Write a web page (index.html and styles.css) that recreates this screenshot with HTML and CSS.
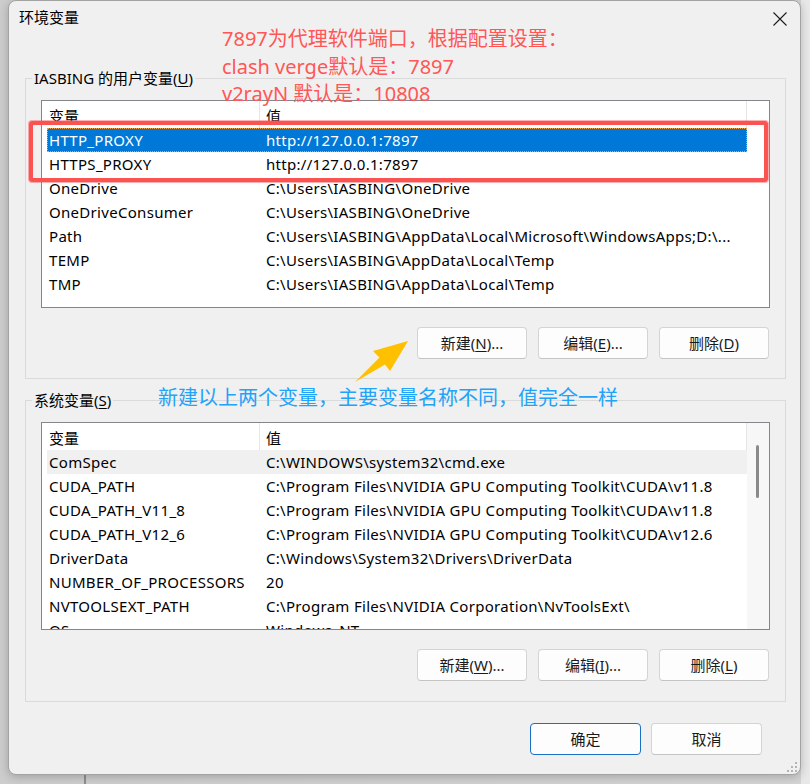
FILE: index.html
```html
<!DOCTYPE html>
<html lang="zh-CN">
<head>
<meta charset="utf-8">
<title>环境变量</title>
<link rel="stylesheet" href="styles.css">
</head>
<body>
<div class="dialog">
  <div class="titlebar">
    <span class="title">环境变量</span>
    <svg class="close" width="14" height="14" viewBox="0 0 14 14" aria-label="关闭"><path d="M0.5 0.5 L13.5 13.5 M13.5 0.5 L0.5 13.5" stroke="#1b1b1b" stroke-width="1.1" fill="none"/></svg>
  </div>

  <section class="group group-user">
    <div class="group-title">IASBING 的用户变量(<u>U</u>)</div>
    <div class="list">
      <div class="list-head"><div class="cell c1">变量</div><div class="cell c2">值</div></div>
      <div class="rows">
        <div class="row selected"><div class="cell c1">HTTP_PROXY</div><div class="cell c2">http://127.0.0.1:7897</div></div>
        <div class="row"><div class="cell c1">HTTPS_PROXY</div><div class="cell c2">http://127.0.0.1:7897</div></div>
        <div class="row"><div class="cell c1">OneDrive</div><div class="cell c2">C:\Users\IASBING\OneDrive</div></div>
        <div class="row"><div class="cell c1">OneDriveConsumer</div><div class="cell c2">C:\Users\IASBING\OneDrive</div></div>
        <div class="row"><div class="cell c1">Path</div><div class="cell c2">C:\Users\IASBING\AppData\Local\Microsoft\WindowsApps;D:\...</div></div>
        <div class="row"><div class="cell c1">TEMP</div><div class="cell c2">C:\Users\IASBING\AppData\Local\Temp</div></div>
        <div class="row"><div class="cell c1">TMP</div><div class="cell c2">C:\Users\IASBING\AppData\Local\Temp</div></div>
      </div>
    </div>
    <div class="btns">
      <button class="btn">新建(<u>N</u>)...</button>
      <button class="btn">编辑(<u>E</u>)...</button>
      <button class="btn">删除(<u>D</u>)</button>
    </div>
  </section>

  <section class="group group-sys">
    <div class="group-title">系统变量(<u>S</u>)</div>
    <div class="list list-scroll">
      <div class="list-main">
        <div class="list-head"><div class="cell c1">变量</div><div class="cell c2">值</div></div>
        <div class="rows">
          <div class="row hover"><div class="cell c1">ComSpec</div><div class="cell c2">C:\WINDOWS\system32\cmd.exe</div></div>
          <div class="row"><div class="cell c1">CUDA_PATH</div><div class="cell c2">C:\Program Files\NVIDIA GPU Computing Toolkit\CUDA\v11.8</div></div>
          <div class="row"><div class="cell c1">CUDA_PATH_V11_8</div><div class="cell c2">C:\Program Files\NVIDIA GPU Computing Toolkit\CUDA\v11.8</div></div>
          <div class="row"><div class="cell c1">CUDA_PATH_V12_6</div><div class="cell c2">C:\Program Files\NVIDIA GPU Computing Toolkit\CUDA\v12.6</div></div>
          <div class="row"><div class="cell c1">DriverData</div><div class="cell c2">C:\Windows\System32\Drivers\DriverData</div></div>
          <div class="row"><div class="cell c1">NUMBER_OF_PROCESSORS</div><div class="cell c2">20</div></div>
          <div class="row"><div class="cell c1">NVTOOLSEXT_PATH</div><div class="cell c2">C:\Program Files\NVIDIA Corporation\NvToolsExt\</div></div>
          <div class="row"><div class="cell c1">OS</div><div class="cell c2">Windows_NT</div></div>
        </div>
      </div>
      <div class="scrollbar"><div class="thumb"></div></div>
    </div>
    <div class="btns">
      <button class="btn">新建(<u>W</u>)...</button>
      <button class="btn">编辑(<u>I</u>)...</button>
      <button class="btn">删除(<u>L</u>)</button>
    </div>
  </section>

  <div class="footer">
    <button class="btn btn-default">确定</button>
    <button class="btn">取消</button>
  </div>

  <div class="note note-red">7897为代理软件端口，根据配置设置：<br>clash verge默认是：7897<br>v2rayN 默认是：10808</div>
  <div class="mark-box"></div>
  <svg class="arrow" width="62" height="50" viewBox="0 0 62 50"><polygon points="58,5 23,15 29.5,21.5 5,46 35,28.5 40,35" fill="#ffc000"/></svg>
  <div class="note note-blue">新建以上两个变量，主要变量名称不同，值完全一样</div>
  <svg class="grip" width="11" height="11" viewBox="0 0 11 11"><g fill="#b4b4b4"><rect x="8" y="0" width="2" height="2"/><rect x="4" y="4" width="2" height="2"/><rect x="8" y="4" width="2" height="2"/><rect x="0" y="8" width="2" height="2"/><rect x="4" y="8" width="2" height="2"/><rect x="8" y="8" width="2" height="2"/></g></svg>
</div>
</body>
</html>
```
FILE: styles.css
```css
* { box-sizing: border-box; }

html {
  height: 100%;
  background:
    linear-gradient(to right, transparent 84px, #8f8f8f 84px, #8f8f8f 86px, transparent 86px) 0 775px / 100% 9px no-repeat,
    linear-gradient(to right, #cdcdcd 0, #d4d4d4 801px, #e8e8e8 801px);
}

body {
  margin: 0;
  height: 784px;
  overflow: hidden;
  font-family: "Noto Sans", "Noto Sans CJK SC", sans-serif;
  font-size: 15px;
  color: #000;
}

.dialog {
  position: relative;
  margin-left: 8px;
  width: 793px;
  height: 775px;
  background: #f0f0f0;
  border: 1px solid #a3a3a3;
  border-radius: 8px;
  box-shadow: 0 2px 10px rgba(0, 0, 0, 0.22);
}

.titlebar {
  height: 32px;
  display: flex;
  align-items: center;
  justify-content: space-between;
  padding: 0 13px 0 10px;
}

.title {
  font-family: "Noto Sans CJK SC", sans-serif;
  font-size: 15px;
  line-height: 32px;
}

.close { display: block; margin-top: 3px; }

.group {
  border: 1px solid #dadada;
  margin: 0 14px 0 16px;
  padding: 0 0 19px 0;
}

.group-user { margin-top: 45px; }
.group-sys { margin-top: 21px; padding-bottom: 20px; }

.group-title {
  width: fit-content;
  margin: -12px 0 0 6px;
  padding: 0 2px;
  line-height: 22px;
  background: #f0f0f0;
}

u { text-decoration-thickness: 1px; text-underline-offset: 2px; }

.list {
  margin: 11px 15px 0 15px;
  height: 208px;
  border: 1px solid #85868d;
  background: #fff;
  overflow: hidden;
}

.list-scroll { display: flex; }
.list-main { flex: 1; min-width: 0; overflow: hidden; }

.list-head {
  display: flex;
  height: 27px;
  padding-left: 5px;
}

.list-head .cell {
  line-height: 25px;
  padding-top: 2px;
  height: 27px;
  border-right: 1px solid #e5e5e5;
  font-family: "Noto Sans CJK SC", sans-serif;
}

.cell {
  white-space: nowrap;
  overflow: hidden;
}

.c1 { width: 213px; padding-left: 2px; flex: none; }
.c2 { width: 487px; padding-left: 6px; flex: none; }

.rows { padding-left: 5px; }

.row {
  display: flex;
  width: 700px;
  height: 24px;
  line-height: 24px;
  letter-spacing: 0.3px;
}

.row.selected {
  background: #0078d7;
  color: #fff;
  outline: 1px dotted #f2a24a;
  outline-offset: -1px;
}

.row.hover { background: #f0f0f0; }

.scrollbar {
  width: 22px;
  flex: none;
  background: #f7f7f7;
  padding: 22px 0 0 9px;
}

.thumb {
  width: 3px;
  height: 53px;
  border-radius: 2px;
  background: #8a8a8a;
}

.btns {
  display: flex;
  justify-content: flex-end;
  gap: 11px;
  margin: 19px 16px 0 0;
}

.btn {
  width: 110px;
  height: 32px;
  border: 1px solid #d4d4d4;
  border-bottom-color: #c4c4c4;
  border-radius: 4px;
  background: #fdfdfd;
  font-family: "Noto Sans", "Noto Sans CJK SC", sans-serif;
  font-size: 15px;
  color: #1a1a1a;
  padding: 0;
  line-height: 30px;
}

.footer {
  display: flex;
  justify-content: flex-end;
  gap: 10px;
  margin-top: 21px;
  padding-right: 38px;
}

.footer .btn { width: 111px; }

.btn-default {
  border-color: #1a6fc4;
}

.note {
  position: absolute;
  white-space: nowrap;
  font-family: "Noto Sans", "Noto Sans CJK SC", sans-serif;
  font-size: 20px;
}

.note-red {
  left: 213px;
  top: 24px;
  line-height: 27.5px;
  color: #ff5656;
}

.note-blue {
  left: 149px;
  top: 383px;
  line-height: 28px;
  color: #22a3fa;
}

.mark-box {
  position: absolute;
  left: 20px;
  top: 120px;
  width: 739px;
  height: 61px;
  border: 4px solid #fb5252;
  border-radius: 3px;
  box-shadow: 0 0 0 1px rgba(251, 82, 82, 0.45);
}

.arrow {
  position: absolute;
  left: 341px;
  top: 335px;
}

.grip {
  position: absolute;
  right: 2px;
  bottom: 1px;
}
```
